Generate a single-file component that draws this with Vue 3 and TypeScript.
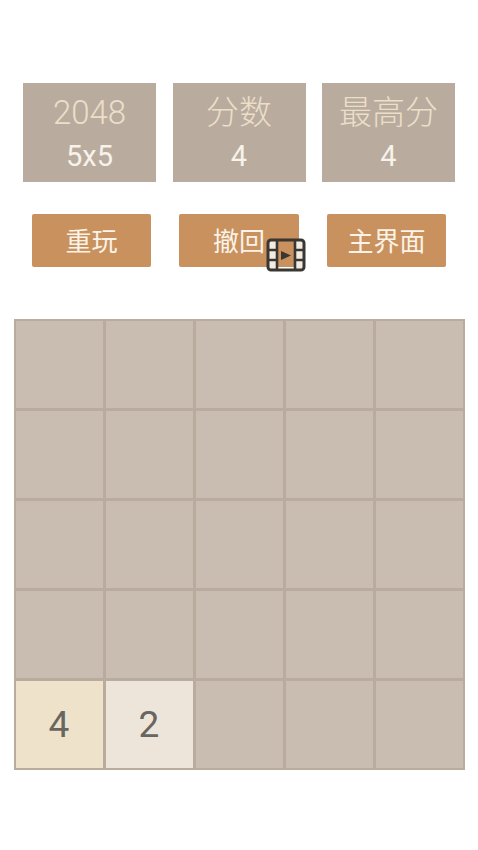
<script setup lang="ts">
const stats: { title: string; value: string }[] = [
  { title: '2048', value: '5x5' },
  { title: '分数', value: '4' },
  { title: '最高分', value: '4' },
]
const buttons: string[] = ['重玩', '撤回', '主界面']
const tiles: Record<number, string> = { 20: '4', 21: '2' }
const cells: number[] = Array.from({ length: 25 }, (_, i) => i)
</script>

<template>
  <main class="page">
    <section class="stats">
      <div v-for="s in stats" :key="s.title" class="stat">
        <div class="stat-title">{{ s.title }}</div>
        <div class="stat-value">{{ s.value }}</div>
      </div>
    </section>
    <section class="actions">
      <button v-for="(b, i) in buttons" :key="b" class="action">
        {{ b }}
        <svg v-if="i === 1" class="ad-icon" viewBox="0 0 40 34" aria-hidden="true">
          <path d="M2 2h9v30H2zM29 2h9v30h-9z" fill="#f3ece2" />
          <rect x="2" y="2" width="36" height="30" rx="3" fill="none" stroke="#3a3632" stroke-width="3" />
          <path d="M11 2v30M29 2v30M2 12h9M2 22h9M29 12h9M29 22h9" fill="none" stroke="#3a3632" stroke-width="2.6" />
          <path d="M15 13l10 4.5-10 4.5z" fill="#3a3632" />
        </svg>
      </button>
    </section>
    <section class="board">
      <div v-for="c in cells" :key="c" class="cell" :class="tiles[c] ? 'tile-' + tiles[c] : ''">
        {{ tiles[c] }}
      </div>
    </section>
  </main>
</template>

<style>
html, body { background: #fff; }
</style>

<style scoped>
.page {
  width: 478px;
  height: 850px;
  box-sizing: border-box;
  padding-top: 83px;
  display: flex;
  flex-direction: column;
  align-items: center;
  overflow: hidden;
  font-family: Roboto, "Noto Sans CJK SC", sans-serif;
}
.stats {
  display: flex;
  gap: 16.5px;
}
.stat {
  width: 133px;
  height: 99px;
  background: #b9ac9e;
  display: flex;
  flex-direction: column;
  align-items: center;
}
.stat-title {
  margin-top: 9px;
  height: 42px;
  line-height: 42px;
  font-size: 33px;
  font-weight: 300;
  color: #ebdfc9;
}
.stat-value {
  margin-top: 4px;
  height: 36px;
  line-height: 36px;
  font-size: 29px;
  font-weight: 400;
  color: #f7f2ea;
}
.actions {
  display: flex;
  gap: 28px;
  margin-top: 32px;
}
.action {
  position: relative;
  width: 119.5px;
  height: 53px;
  border: 0;
  padding: 3px 0 0;
  border-radius: 2px;
  background: #c8915e;
  color: #fbf3e8;
  font-family: inherit;
  font-size: 26px;
  font-weight: 400;
  line-height: 50px;
}
.ad-icon {
  position: absolute;
  left: 86.5px;
  top: 24px;
  width: 40px;
  height: 34px;
}
.board {
  width: 451px;
  height: 451px;
  box-sizing: border-box;
  margin-top: 52px;
  padding: 2px;
  background: #b9ac9e;
  display: grid;
  grid-template-columns: repeat(5, 87px);
  grid-template-rows: repeat(5, 87px);
  gap: 3px;
}
.cell {
  background: #c9bdb2;
  display: flex;
  align-items: center;
  justify-content: center;
  font-size: 37px;
  font-weight: 400;
  color: #676660;
}
.tile-4 { background: #eee2cb; }
.tile-2 { background: #eee5da; }
</style>
